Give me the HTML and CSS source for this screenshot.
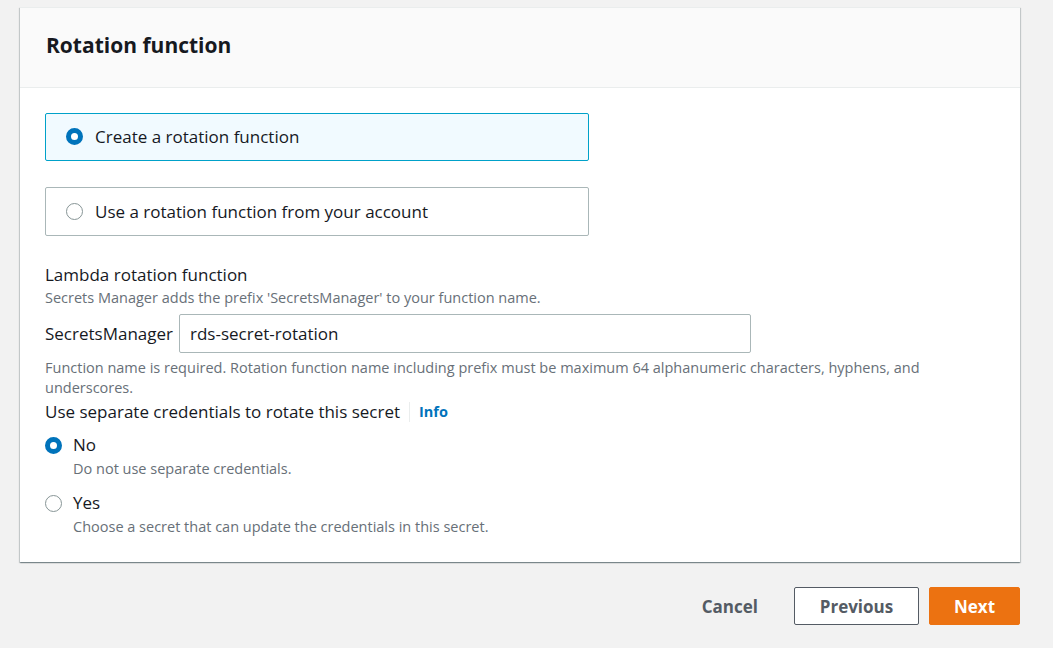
FILE: index.html
```html
<!DOCTYPE html>
<html>
<head>
<meta charset="utf-8">
<link rel="stylesheet" href="styles.css">
</head>
<body>
<div class="page">
  <section class="card">
    <header class="card-header">
      <h2 class="card-title">Rotation function</h2>
    </header>
    <div class="card-body">
      <div class="tiles">
        <label class="tile tile-selected">
          <span class="radio radio-checked"></span>
          <span class="tile-text">Create a rotation function</span>
        </label>
        <label class="tile">
          <span class="radio"></span>
          <span class="tile-text">Use a rotation function from your account</span>
        </label>
      </div>

      <div class="field">
        <div class="field-label">Lambda rotation function</div>
        <div class="field-desc">Secrets Manager adds the prefix 'SecretsManager' to your function name.</div>
        <div class="prefix-row">
          <span class="prefix">SecretsManager</span>
          <div class="input">rds-secret-rotation</div>
        </div>
        <div class="constraint">Function name is required. Rotation function name including prefix must be maximum 64 alphanumeric characters, hyphens, and underscores.</div>
      </div>

      <div class="field field-creds">
        <div class="field-label creds-label">
          <span>Use separate credentials to rotate this secret</span>
          <span class="divider"></span>
          <span class="info">Info</span>
        </div>
        <div class="radio-group">
          <div class="radio-item">
            <span class="radio radio-checked"></span>
            <div class="radio-content">
              <div class="radio-label">No</div>
              <div class="radio-desc">Do not use separate credentials.</div>
            </div>
          </div>
          <div class="radio-item">
            <span class="radio"></span>
            <div class="radio-content">
              <div class="radio-label">Yes</div>
              <div class="radio-desc">Choose a secret that can update the credentials in this secret.</div>
            </div>
          </div>
        </div>
      </div>
    </div>
  </section>

  <div class="actions">
    <button class="btn btn-link">Cancel</button>
    <button class="btn btn-normal">Previous</button>
    <button class="btn btn-primary">Next</button>
  </div>
</div>
</body>
</html>
```

FILE: styles.css
```css
* { box-sizing: border-box; }

html, body {
  margin: 0;
  padding: 0;
  background: #f2f2f2;
  font-family: "Open Sans", "Noto Sans", sans-serif;
  color: #16191f;
}

.page {
  padding: 7px 33px 0 20px;
}

.card {
  width: 1000px;
  background: #ffffff;
  border-top: 1px solid #eaeded;
  box-shadow: 0 1px 1px 0 rgba(0, 28, 36, 0.3), 1px 1px 1px 0 rgba(0, 28, 36, 0.15), -1px 1px 1px 0 rgba(0, 28, 36, 0.15);
}

.card-header {
  height: 80px;
  background: #fafafa;
  border-bottom: 1px solid #eaeded;
  padding: 0 26px 5px 26px;
  display: flex;
  align-items: center;
}

.card-title {
  margin: 0;
  font-size: 21px;
  font-weight: 700;
  line-height: 28px;
  color: #16191f;
}

.card-body {
  padding: 25px 25px 24px 25px;
}

.tiles {
  display: flex;
  flex-direction: column;
  gap: 26px;
  width: 544px;
}

.tile {
  display: flex;
  align-items: center;
  gap: 12px;
  height: 48px;
  padding: 0 20px 1px 20px;
  border: 1px solid #aab7b8;
  border-radius: 2px;
  background: #ffffff;
  font-size: 17px;
}

.tile + .tile { height: 49px; }

.tile-selected {
  border-color: #00a1c9;
  background: #f1faff;
}

.radio {
  flex: none;
  width: 17px;
  height: 17px;
  border-radius: 50%;
  border: 1px solid #879596;
  background: #ffffff;
}

.radio-checked {
  border: 5px solid #0073bb;
  background: #ffffff;
}

.field {
  margin-top: 27px;
}

.field-label {
  font-size: 17px;
  line-height: 24px;
}

.field-desc {
  font-size: 14.5px;
  line-height: 20px;
  color: #687078;
  margin-top: 1px;
}

.prefix-row {
  display: flex;
  align-items: center;
  gap: 6px;
  margin-top: 6px;
}

.prefix {
  font-size: 17px;
}

.input {
  width: 572px;
  height: 39px;
  border: 1px solid #aab7b8;
  border-radius: 2px;
  padding: 0 10px;
  font-size: 17px;
  display: flex;
  align-items: center;
}

.constraint {
  font-size: 14.5px;
  line-height: 20px;
  color: #687078;
  margin-top: 5px;
}

.field-creds {
  margin-top: 2px;
}

.creds-label {
  display: flex;
  align-items: center;
}

.divider {
  width: 1px;
  height: 20px;
  background: #eaeded;
  margin: 0 9px 0 9px;
}

.info {
  font-size: 14.5px;
  font-weight: 700;
  color: #0073bb;
}

.radio-group {
  display: flex;
  flex-direction: column;
  gap: 11px;
  margin-top: 9px;
}

.radio-item {
  display: flex;
  gap: 11px;
}

.radio-item .radio {
  margin-top: 4px;
}

.radio-label {
  font-size: 17px;
  line-height: 24px;
}

.radio-desc {
  font-size: 14.5px;
  line-height: 22px;
  color: #687078;
  margin-top: 1px;
}

.actions {
  display: flex;
  justify-content: flex-end;
  align-items: center;
  gap: 10px;
  width: 1000px;
  margin-top: 25px;
}

.btn {
  font-family: inherit;
  font-size: 17px;
  font-weight: 700;
  height: 38px;
  border-radius: 2px;
  cursor: pointer;
}

.btn-link {
  border: none;
  background: transparent;
  color: #545b64;
  padding: 0 26px;
}

.btn-normal {
  width: 125px;
  border: 1px solid #545b64;
  background: #ffffff;
  color: #545b64;
}

.btn-primary {
  width: 91px;
  border: 1px solid #ec7211;
  background: #ec7211;
  color: #ffffff;
}
```
